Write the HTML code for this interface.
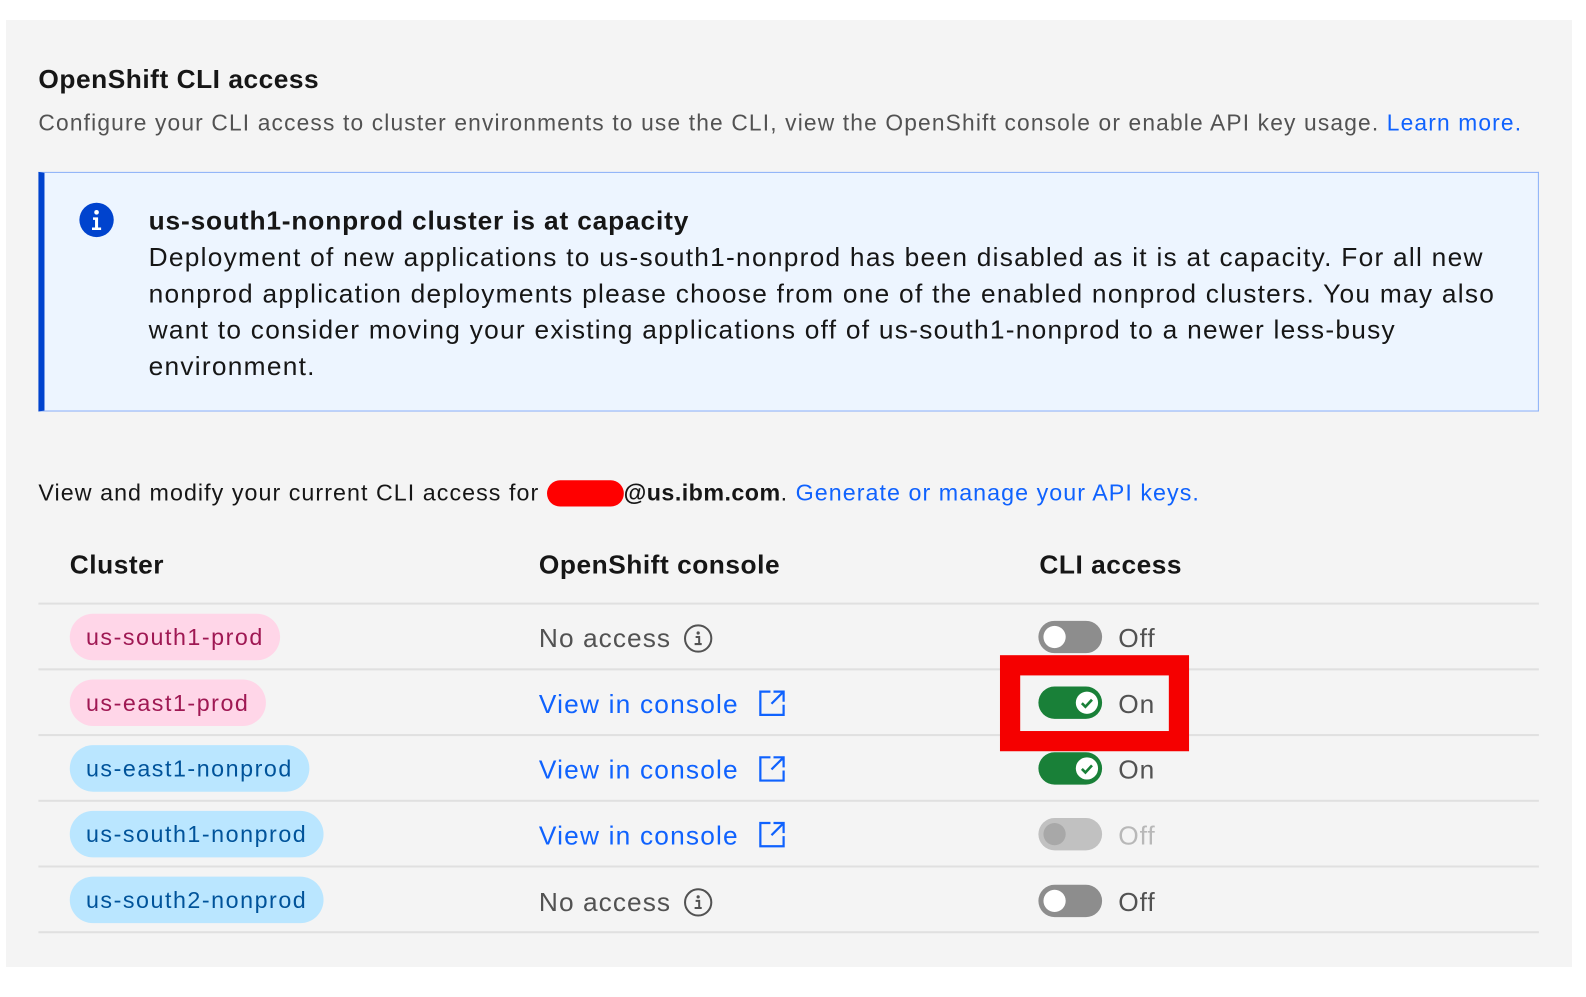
<!DOCTYPE html>
<html><head><meta charset="utf-8"><style>
*{margin:0;padding:0;box-sizing:border-box}
body{width:1586px;height:986px;background:#fff;position:relative;overflow:hidden;font-family:"Liberation Sans",sans-serif;color:#161616;letter-spacing:0.055em}
#wrap{position:absolute;left:0;top:0;width:1586px;height:986px;transform:scale(1.0111);transform-origin:0 0}
.abs{position:absolute;white-space:nowrap}
#panel{position:absolute;left:6px;top:20px;width:1566px;height:947px;background:#f4f4f4}
.line{position:absolute;left:38px;width:1484px;height:2px;background:#e0e0e0}
.tag{position:absolute;left:69px;height:46px;border-radius:23px;font-size:23px;line-height:46px;padding:0 16px;white-space:nowrap;letter-spacing:0.066em}
.pink{background:#ffd6e8;color:#9f1853}
.blue{background:#bae6ff;color:#00539a}
.cell{position:absolute;left:533px;font-size:26px;line-height:32px;white-space:nowrap}
.tg{position:absolute;left:1027px;width:63px;height:32px;border-radius:16px}
.tg .k{position:absolute;top:5px;width:22px;height:22px;border-radius:50%;background:#fff}
.tl{position:absolute;left:1106px;font-size:26px;line-height:32px;color:#525252}
b,.b{letter-spacing:0.02em}
</style></head><body>
<div id="panel"></div>
<div id="wrap">
<div class="abs b" style="left:38px;top:62px;font-size:26px;font-weight:bold;line-height:32px">OpenShift CLI access</div>
<div class="abs" style="left:38px;top:107px;font-size:22.5px;line-height:30px;color:#525252;letter-spacing:0.051em">Configure your CLI access to cluster environments to use the CLI, view the OpenShift console or enable API key usage. <span style="color:#0f62fe">Learn more.</span></div>

<div style="position:absolute;left:38px;top:170px;width:1484px;height:237px;background:#edf5ff;border:1.5px solid #8ab0f8;border-left:6px solid #0043ce"></div>
<svg class="abs" style="left:78px;top:200px" width="35" height="35" viewBox="0 0 35 35"><circle cx="17.5" cy="17.5" r="17" fill="#0043ce"/><circle cx="17.5" cy="10" r="2.3" fill="#fff"/><path d="M14 15h5v10h3v2.5h-9V25h3v-7.5h-2z" fill="#fff"/></svg>
<div class="abs b" style="left:147px;top:200px;font-size:26px;line-height:36px;font-weight:bold;letter-spacing:0.032em">us-south1-nonprod cluster is at capacity</div>
<div class="abs" style="left:147px;top:236px;font-size:26px;line-height:36px;letter-spacing:0.048em">Deployment of new applications to us-south1-nonprod has been disabled as it is at capacity. For all new<br>nonprod application deployments please choose from one of the enabled nonprod clusters. You may also<br>want to consider moving your existing applications off of us-south1-nonprod to a newer less-busy<br>environment.</div>

<div class="abs" style="left:38px;top:472px;font-size:23px;line-height:30px;letter-spacing:0.045em">View and modify your current CLI access for <span style="display:inline-block;width:76px;height:26px;background:#f00;border-radius:13px;vertical-align:-6px"></span><b>@us.ibm.com</b>. <span style="color:#0f62fe">Generate or manage your API keys.</span></div>

<div class="abs b" style="left:69px;top:542px;font-size:26px;font-weight:bold;line-height:32px">Cluster</div>
<div class="abs b" style="left:533px;top:542px;font-size:26px;font-weight:bold;line-height:32px">OpenShift console</div>
<div class="abs b" style="left:1028px;top:542px;font-size:26px;font-weight:bold;line-height:32px">CLI access</div>

<div class="line" style="top:596px"></div>
<div class="line" style="top:661px"></div>
<div class="line" style="top:726px"></div>
<div class="line" style="top:791px"></div>
<div class="line" style="top:856px"></div>
<div class="line" style="top:921px"></div>

<div class="tag pink" style="top:607px">us-south1-prod</div>
<div class="tag pink" style="top:672px">us-east1-prod</div>
<div class="tag blue" style="top:737px">us-east1-nonprod</div>
<div class="tag blue" style="top:802px">us-south1-nonprod</div>
<div class="tag blue" style="top:867px">us-south2-nonprod</div>

<div class="cell" style="top:615px;color:#525252;letter-spacing:0.04em">No access</div>
<svg class="abs" style="left:676px;top:617px" width="29" height="29" viewBox="0 0 29 29"><circle cx="14.5" cy="14.5" r="13" fill="none" stroke="#525252" stroke-width="2"/><circle cx="14.5" cy="9" r="1.6" fill="#525252"/><path d="M12 13h3.5v7h2.5M11 20h7" stroke="#525252" stroke-width="2" fill="none"/></svg>
<div class="cell" style="top:876px;color:#525252;letter-spacing:0.04em">No access</div>
<svg class="abs" style="left:676px;top:878px" width="29" height="29" viewBox="0 0 29 29"><circle cx="14.5" cy="14.5" r="13" fill="none" stroke="#525252" stroke-width="2"/><circle cx="14.5" cy="9" r="1.6" fill="#525252"/><path d="M12 13h3.5v7h2.5M11 20h7" stroke="#525252" stroke-width="2" fill="none"/></svg>

<div class="cell" style="top:680px;color:#0f62fe;letter-spacing:0.045em">View in console</div>
<div class="cell" style="top:745px;color:#0f62fe;letter-spacing:0.045em">View in console</div>
<div class="cell" style="top:810px;color:#0f62fe;letter-spacing:0.045em">View in console</div>
<svg class="abs" style="left:750px;top:682px" width="27" height="27" viewBox="0 0 27 27"><path d="M12 2H2v23h23V15M15 2h10v10M25 2L13 14" fill="none" stroke="#0f62fe" stroke-width="2.2"/></svg>
<svg class="abs" style="left:750px;top:747px" width="27" height="27" viewBox="0 0 27 27"><path d="M12 2H2v23h23V15M15 2h10v10M25 2L13 14" fill="none" stroke="#0f62fe" stroke-width="2.2"/></svg>
<svg class="abs" style="left:750px;top:812px" width="27" height="27" viewBox="0 0 27 27"><path d="M12 2H2v23h23V15M15 2h10v10M25 2L13 14" fill="none" stroke="#0f62fe" stroke-width="2.2"/></svg>

<div class="tg" style="top:614px;background:#8d8d8d"><div class="k" style="left:5px"></div></div>
<div class="tl" style="top:615px">Off</div>
<div class="tg" style="top:679px;background:#198038"><div class="k" style="left:37px"><svg width="22" height="22"><path d="M6 11.5l3.5 3.5 6.5-7" fill="none" stroke="#198038" stroke-width="2.6"/></svg></div></div>
<div class="tl" style="top:680px">On</div>
<div class="tg" style="top:744px;background:#198038"><div class="k" style="left:37px"><svg width="22" height="22"><path d="M6 11.5l3.5 3.5 6.5-7" fill="none" stroke="#198038" stroke-width="2.6"/></svg></div></div>
<div class="tl" style="top:745px">On</div>
<div class="tg" style="top:809px;background:#c1c1c1"><div class="k" style="left:5px;background:#a8a8a8"></div></div>
<div class="tl" style="top:810px;color:#b8b8b8">Off</div>
<div class="tg" style="top:875px;background:#8d8d8d"><div class="k" style="left:5px"></div></div>
<div class="tl" style="top:876px">Off</div>

<div style="position:absolute;left:989px;top:648px;width:187px;height:95px;border:20px solid #f50000"></div>
</div>
</body></html>
